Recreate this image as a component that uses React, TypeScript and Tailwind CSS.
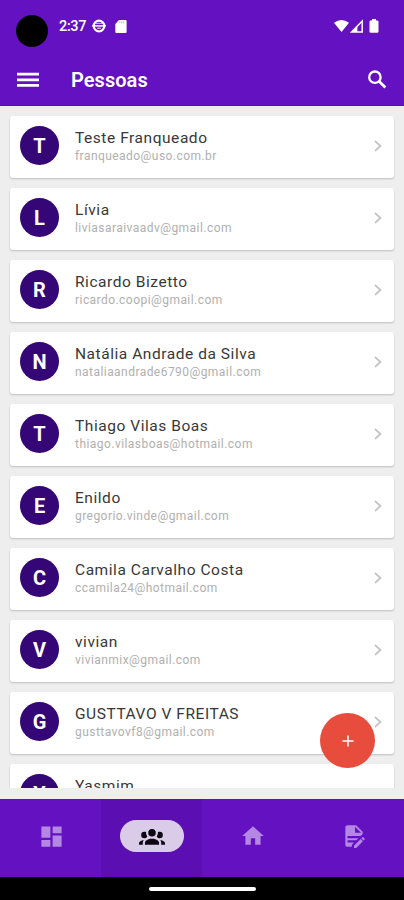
import React from "react";
import { MdDashboard, MdHome } from "react-icons/md";

type Person = { name: string; email?: string };

const people: Person[] = [
  { name: "Teste Franqueado", email: "franqueado@uso.com.br" },
  { name: "Lívia", email: "liviasaraivaadv@gmail.com" },
  { name: "Ricardo Bizetto", email: "ricardo.coopi@gmail.com" },
  { name: "Natália Andrade da Silva", email: "nataliaandrade6790@gmail.com" },
  { name: "Thiago Vilas Boas", email: "thiago.vilasboas@hotmail.com" },
  { name: "Enildo", email: "gregorio.vinde@gmail.com" },
  { name: "Camila Carvalho Costa", email: "ccamila24@hotmail.com" },
  { name: "vivian", email: "vivianmix@gmail.com" },
  { name: "GUSTTAVO V FREITAS", email: "gusttavovf8@gmail.com" },
  { name: "Yasmim" },
];

function StatusBar() {
  return (
    <div className="flex h-[53px] items-start text-white">
      <div className="ml-4 mt-[15px] size-8 rounded-full bg-black" />
      <span className="ml-[11px] mt-[17px] text-[14.5px] font-medium leading-5 tracking-[-0.35px]">2:37</span>
      <svg className="ml-[6px] mt-[19px] size-[14px]" viewBox="0 0 14 14" fill="none" stroke="currentColor">
        <circle cx="7" cy="7" r="5.3" strokeWidth="2.2" />
        <path d="M0.2 6.9h13.6" strokeWidth="1.5" />
        <path d="M3.4 4.3h7.2" strokeWidth="0.8" />
        <path d="M5 9.2h4" strokeWidth="0.9" />
      </svg>
      <svg className="ml-[9px] mt-5 h-[13px] w-3" viewBox="0 0 12 13" fill="currentColor">
        <path d="M4 0h6.6a1 1 0 0 1 1 1v11a1 1 0 0 1-1 1H1.3a1 1 0 0 1-1-1V4z" />
        <path d="M4.8 1.6v1.6M6.8 1.6v1.6M8.8 1.6v1.6" stroke="#6411c1" strokeWidth="0.4" />
      </svg>
      <svg className="ml-auto mt-5 h-3 w-[15px]" viewBox="0 0 15 12" fill="currentColor">
        <path d="M0 2.8Q7.5-2.6 15 2.8L7.5 12z" />
      </svg>
      <svg className="ml-[1px] mt-[19px] h-[14px] w-[13px]" viewBox="0 0 13 14">
        <path d="M1.6 13 12.2 2v11z" fill="none" stroke="white" strokeWidth="1.5" />
        <path d="M1.6 13 7.4 7v6z" fill="white" />
      </svg>
      <svg className="ml-[6px] mr-[25px] mt-[19px] h-[14px] w-[10px]" viewBox="0 0 10 14" fill="currentColor">
        <path d="M3 0h4v1.4h1.2A1.3 1.3 0 0 1 9.5 2.7v9.8A1.3 1.3 0 0 1 8.2 13.8H1.8A1.3 1.3 0 0 1 .5 12.5V2.7A1.3 1.3 0 0 1 1.8 1.4H3z" />
      </svg>
    </div>
  );
}

function Header() {
  return (
    <header className="h-[106px] shrink-0 border-b border-[#5b0fb0] bg-[#6411c1]">
      <StatusBar />
      <div className="flex h-[53px] items-center text-white">
        <svg className="ml-[17px] h-4 w-[22px]" viewBox="0 0 22 16" fill="currentColor">
          <path d="M0 .8h22v2.8H0zM0 6.4h22v2.8H0zM0 12h22v2.8H0z" />
        </svg>
        <h1 className="ml-[32px] text-[20px] font-semibold leading-6 tracking-[0.05px]">Pessoas</h1>
        <svg
          className="ml-auto mr-[17px] size-5"
          viewBox="0 0 20 20"
          fill="none"
          stroke="currentColor"
          strokeWidth="2.3"
        >
          <circle cx="7.9" cy="7.2" r="5.7" />
          <path d="M12 11.3 18.4 17.6" strokeWidth="2.8" />
        </svg>
      </div>
    </header>
  );
}

function PersonCard({ person }: { person: Person }) {
  return (
    <li className="flex h-[62px] shrink-0 items-start rounded-[3px] bg-white shadow-[0_1px_2px_rgba(0,0,0,0.2)]">
      <div className="ml-[10px] mt-[10px] flex size-[39px] items-center justify-center rounded-full bg-[#350676] pt-px text-[20px] font-bold text-white">
        {person.name[0].toUpperCase()}
      </div>
      <div className="ml-4 mt-3 flex-1">
        <p className="text-[15.5px] leading-5 tracking-[0.55px] text-[#383838]">{person.name}</p>
        <p className="text-[12px] leading-4 tracking-[0.45px] text-[#b0b0b0]">{person.email}</p>
      </div>
      <svg className="mr-[12px] mt-6 h-3 w-2" viewBox="0 0 8 12" fill="none" stroke="#c6c6c6" strokeWidth="1.8">
        <path d="M1 1l5.4 5L1 11" />
      </svg>
    </li>
  );
}

function BottomNav() {
  return (
    <nav className="grid h-[78px] shrink-0 grid-cols-4 bg-[#6411c1] text-[#b487e2]">
      <div className="flex items-center justify-center pb-1 pl-px">
        <MdDashboard className="size-[27px]" />
      </div>
      <div className="flex items-center justify-center bg-[#5b0eb2] pb-1">
        <div className="flex h-8 w-16 items-center justify-center rounded-full bg-[#dacce9] pl-px text-[#0b0612]">
          <svg className="size-[26px]" viewBox="0 0 24 24" fill="currentColor">
            <path d="M12,5.5A3.5,3.5 0 0,1 15.5,9A3.5,3.5 0 0,1 12,12.5A3.5,3.5 0 0,1 8.5,9A3.5,3.5 0 0,1 12,5.5M5,8C5.56,8 6.08,8.15 6.53,8.42C6.38,9.85 6.8,11.27 7.66,12.38C7.16,13.34 6.16,14 5,14A3,3 0 0,1 2,11A3,3 0 0,1 5,8M19,8A3,3 0 0,1 22,11A3,3 0 0,1 19,14C17.84,14 16.84,13.34 16.34,12.38C17.2,11.27 17.62,9.85 17.47,8.42C17.92,8.15 18.44,8 19,8M5.5,18.25C5.5,16.18 8.41,14.5 12,14.5C15.59,14.5 18.5,16.18 18.5,18.25V20H5.5V18.25M0,20V18.5C0,17.11 1.89,15.94 4.45,15.6C3.86,16.28 3.5,17.22 3.5,18.25V20H0M24,20H20.5V18.25C20.5,17.22 20.14,16.28 19.55,15.6C22.11,15.94 24,17.11 24,18.5V20Z" />
          </svg>
        </div>
      </div>
      <div className="flex items-center justify-center pb-1">
        <MdHome className="size-[26px]" />
      </div>
      <div className="flex items-center justify-center pb-1">
        <svg className="size-[26px]" viewBox="0 0 24 24" fill="currentColor">
          <path d="M6,2C4.89,2 4,2.9 4,4V20A2,2 0 0,0 6,22H10V20.09L12.09,18H6V16H14.09L16.09,14H6V12H18.09L20,10.09V8L14,2H6M13,3.5L18.5,9H13V3.5M20.15,13C20,13 19.86,13.05 19.75,13.16L18.73,14.18L20.82,16.26L21.84,15.25C22.05,15.03 22.05,14.67 21.84,14.46L20.54,13.16C20.43,13.05 20.29,13 20.15,13M18.14,14.77L12,20.92V23H14.08L20.23,16.85L18.14,14.77Z" />
        </svg>
      </div>
    </nav>
  );
}

export default function App() {
  return (
    <div className="relative flex h-[900px] w-[404px] flex-col overflow-hidden bg-[#eeeeee] font-[Roboto,sans-serif]">
      <Header />
      <main className="mb-[11px] h-[682px] shrink-0 overflow-hidden">
        <ul className="flex flex-col gap-[10px] px-[10px] pt-[10px]">
          {people.map((person) => (
            <PersonCard key={person.name} person={person} />
          ))}
        </ul>
      </main>
      <BottomNav />
      <div className="flex h-[23px] shrink-0 items-center justify-center bg-black">
        <div className="h-1 w-[107px] rounded-full bg-white" />
      </div>
      <button
        aria-label="Adicionar"
        className="absolute left-[320px] top-[713px] flex size-[55px] items-center justify-center rounded-full bg-[#e84c3d]"
      >
        <svg className="size-3" viewBox="0 0 12 12" stroke="white" strokeWidth="1.5">
          <path d="M6 0.5v11M0.5 6h11" />
        </svg>
      </button>
    </div>
  );
}
